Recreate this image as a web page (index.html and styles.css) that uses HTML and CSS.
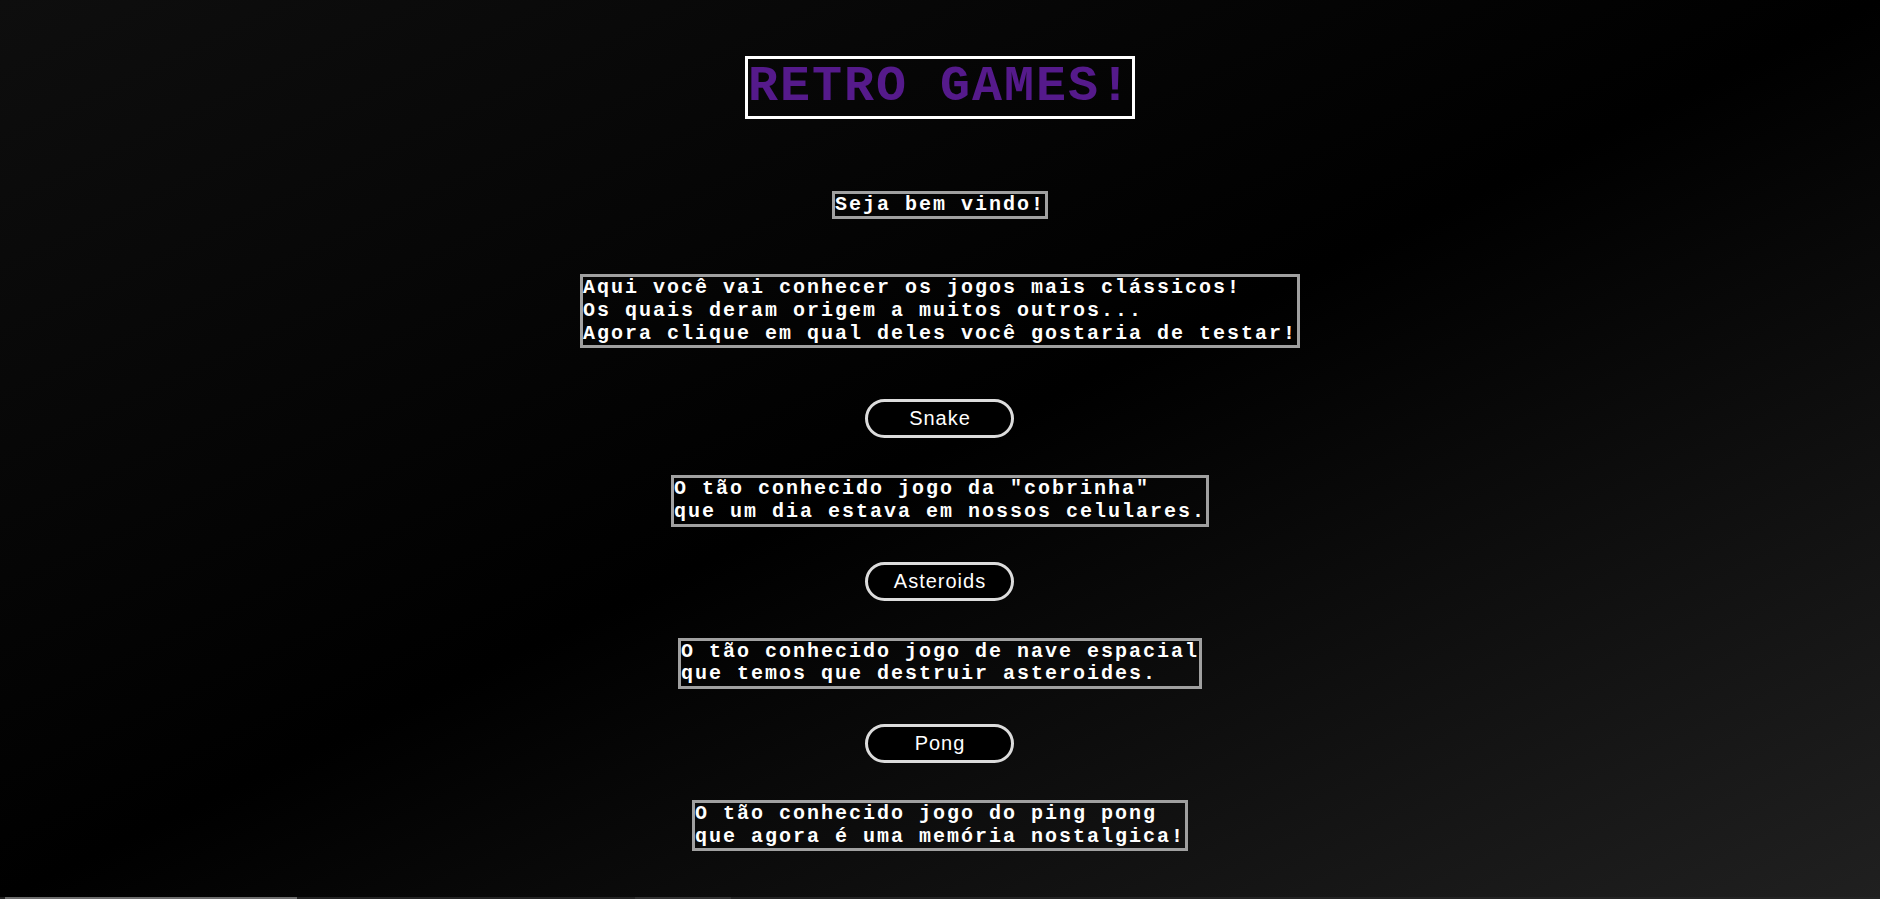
FILE: index.html
```html
<!DOCTYPE html>
<html lang="pt-BR">
<head>
<meta charset="utf-8">
<title>Retro Games!</title>
<link rel="stylesheet" href="styles.css">
</head>
<body>
<main class="page">
  <h1 class="title"><a class="title-link" href="#">RETRO GAMES!</a></h1>
  <p class="box welcome">Seja bem vindo!</p>
  <p class="box intro">Aqui você vai conhecer os jogos mais clássicos!<br>Os quais deram origem a muitos outros...<br>Agora clique em qual deles você gostaria de testar!</p>

  <section class="game">
    <button class="btn" type="button">Snake</button>
    <p class="box desc">O tão conhecido jogo da "cobrinha"<br>que um dia estava em nossos celulares.</p>
  </section>

  <section class="game">
    <button class="btn" type="button">Asteroids</button>
    <p class="box desc">O tão conhecido jogo de nave espacial<br>que temos que destruir asteroides.</p>
  </section>

  <section class="game last">
    <button class="btn" type="button">Pong</button>
    <p class="box desc">O tão conhecido jogo do ping pong<br>que agora é uma memória nostalgica!</p>
  </section>
</main>
<div class="hbar"><span class="hbar-thumb"></span><span class="hbar-gap"></span><span class="hbar-seg"></span></div>
</body>
</html>
```

FILE: styles.css
```css
html, body {
  margin: 0;
  padding: 0;
  min-height: 100%;
}

body {
  min-height: 899px;
  background: linear-gradient(to bottom right, #0e0e0e 0%, #000 50%, #202020 100%);
  color: #fff;
  font-family: "Liberation Mono", "Courier New", monospace;
  font-weight: bold;
  font-size: 20px;
}

.page {
  display: flex;
  flex-direction: column;
  align-items: center;
  padding-top: 56px;
  padding-bottom: 40px;
}

.title {
  margin: 0 0 72px;
  border: 3px solid #fff;
  font-size: 50px;
  line-height: 1.133;
  letter-spacing: 2px;
  font-weight: bold;
}

.title-link {
  color: #551a8b;
  text-decoration: none;
}

.box {
  margin: 0;
  border: 3px solid #a0a0a0;
  line-height: 1.133;
  letter-spacing: 2px;
  text-align: left;
  white-space: nowrap;
}

.welcome {
  margin-bottom: 55px;
}

.intro {
  margin-bottom: 51px;
}

.game {
  display: flex;
  flex-direction: column;
  align-items: center;
  margin-bottom: 35px;
}

.game.last {
  margin-bottom: 0;
}

.btn {
  box-sizing: border-box;
  width: 149px;
  height: 39px;
  margin: 0 0 37px;
  padding: 0;
  border: 3px solid #dcdcdc;
  border-radius: 20px;
  background: #000;
  color: #fff;
  font-family: "Liberation Sans", Arial, sans-serif;
  font-weight: normal;
  font-size: 20px;
  letter-spacing: 1px;
  cursor: pointer;
}

.hbar {
  position: fixed;
  left: 0;
  right: 0;
  bottom: 0;
  height: 2px;
  display: flex;
  background: #242424;
}

.hbar-thumb {
  width: 292px;
  margin-left: 5px;
  background: #6e6e6e;
}

.hbar-gap {
  width: 338px;
}

.hbar-seg {
  width: 96px;
  background: #333;
}
```
